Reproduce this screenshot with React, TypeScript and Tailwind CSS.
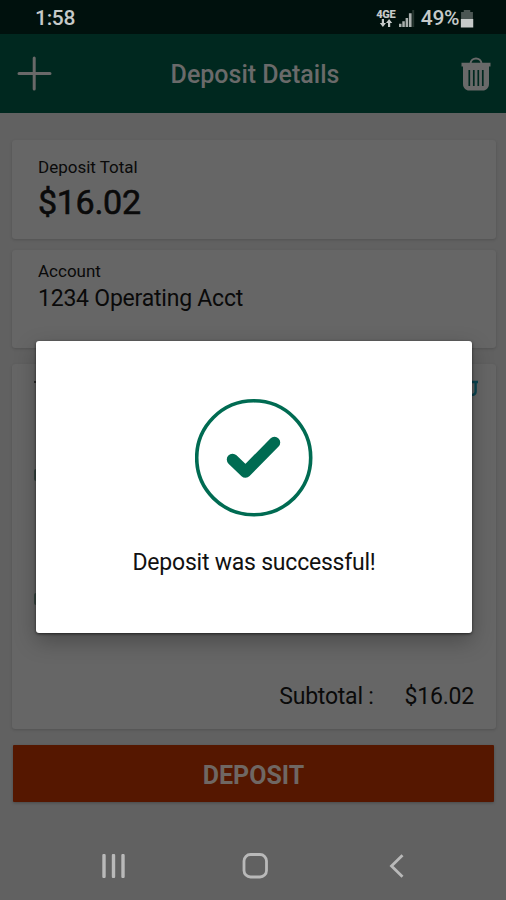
import React from 'react';

const TrashIcon: React.FC = () => (
    <svg width="30" height="34" viewBox="0 0 30 34" fill="none">
        <path d="M9.5 6.5 C10 -0.3 20 -0.3 20.5 6.5" stroke="#696969" strokeWidth="2" />
        <path d="M0.5 5.8 H29.5 V9.5 H28 V27 C28 31 25 33.5 22 33.5 H8 C5 33.5 2 31 2 27 V9.5 H0.5 Z" fill="#696969" />
        <path d="M8.3 13 V29 M12.8 13 V29 M17.3 13 V29 M21.8 13 V29" stroke="#00281f" strokeWidth="1.7" />
    </svg>
);

const StatusBar: React.FC = () => (
    <div className="h-[34px] shrink-0 bg-[#00110d] flex items-center pl-[35px] pr-[32px] pt-[3px] text-[#c6cac9]">
        <span className="flex-1 text-[21px] font-medium leading-none tracking-[-0.3px]">1:58</span>
        <div className="w-[22px] mr-[2px] flex flex-col items-center">
            <span className="text-[11px] font-black leading-[9px] tracking-[-0.2px]">4GE</span>
            <svg width="14" height="8" viewBox="0 0 14 8" fill="currentColor">
                <path d="M2.8 0 H5 V4 H7 L3.9 8 L0.8 4 H2.8 Z M9 8 H11.2 V4 H13.2 L10.1 0 L7 4 H9 Z" />
            </svg>
        </div>
        <svg width="16" height="17" viewBox="0 0 16 16" preserveAspectRatio="none" fill="#a9afad">
            <path d="M0 13 H2.5 V16 H0 Z M3.3 10.5 H5.8 V16 H3.3 Z M6.6 7.5 H9.1 V16 H6.6 Z M9.9 3 H12.6 V16 H9.9 Z" />
            <path d="M13.2 0 H15.2 V16 H13.2 Z" fill="#25352f" />
        </svg>
        <span className="ml-[6px] text-[21px] font-medium leading-none tracking-[-0.4px]">49%</span>
        <svg className="ml-px" width="14" height="18" viewBox="0 0 13 18" preserveAspectRatio="none">
            <path d="M3.5 0 H9.5 V2 H12 V9 H1 V2 H3.5 Z" fill="#4b5653" />
            <path d="M0.8 9 H12.3 V17.5 H0.8 Z" fill="#c6cac9" />
        </svg>
    </div>
);

const Header: React.FC = () => (
    <div className="h-[79px] shrink-0 bg-[#00281f] flex items-center justify-between pl-[17px] pr-[15px]">
        <svg width="35" height="35" viewBox="0 0 35 35" stroke="#696969" strokeWidth="3" strokeLinecap="round">
            <path d="M17.2 2 V33 M2 17.5 H33" />
        </svg>
        <h1 className="pt-[2px] pr-[3px] text-[25px] font-medium leading-none text-[#6a6a6a]">Deposit Details</h1>
        <TrashIcon />
    </div>
);

const NavBar: React.FC = () => (
    <div className="h-[69px] shrink-0 flex items-center pl-[102px]">
        <svg width="23" height="24" viewBox="0 0 23 24" stroke="#b9b9b9" strokeWidth="3.4" strokeLinecap="round">
            <path d="M2 1.5 V22.5 M11.5 1.5 V22.5 M21 1.5 V22.5" />
        </svg>
        <svg className="ml-[117px]" width="26" height="26" viewBox="0 0 26 26" fill="none" stroke="#b9b9b9" strokeWidth="2.8">
            <rect x="2" y="1.5" width="22.5" height="22.5" rx="6.5" />
        </svg>
        <svg className="ml-[121px]" width="15" height="24" viewBox="0 0 15 24" fill="none" stroke="#b9b9b9" strokeWidth="2.8">
            <path d="M13.5 1.2 L2.5 12 L13.5 22.8" />
        </svg>
    </div>
);

const SuccessDialog: React.FC = () => (
    <div className="absolute left-[36px] top-[341px] w-[436px] h-[292px] rounded-[3px] bg-white flex flex-col items-center pt-[58px] shadow-[0_8px_22px_rgba(0,0,0,0.28),0_1px_3px_rgba(0,0,0,0.6)]">
        <svg width="118" height="118" viewBox="0 0 118 118" fill="none" stroke="#006b52">
            <circle cx="58.7" cy="58.8" r="57" strokeWidth="3.6" />
            <path d="M37.5 60.5 L50.5 73 L79.5 43.5" strokeWidth="11.5" strokeLinecap="round" strokeLinejoin="round" />
        </svg>
        <p className="mt-[32px] text-[23px] leading-[28px] tracking-[-0.22px] text-[#111111]">Deposit was successful!</p>
    </div>
);

interface CardProps {
    className: string;
    children: React.ReactNode;
}
const Card: React.FC<CardProps> = ({ className, children }) => (
    <div className={`bg-[#666666] rounded-[3px] shadow-[0_1px_3px_rgba(0,0,0,0.16)] ${className}`}>{children}</div>
);

const App: React.FC = () => {
    return (
        <div className="relative w-[506px] h-[900px] overflow-hidden bg-[#616161] flex flex-col font-['Roboto',sans-serif] text-[#0a0a0a]">
            <StatusBar />
            <Header />
            <div className="flex-1 flex flex-col pt-[27px] pl-[12px] pr-[10px]">
                <Card className="h-[99px] pt-[17px] pl-[26px]">
                    <p className="text-[17px] leading-[20px]">Deposit Total</p>
                    <p className="mt-[5px] text-[34px] leading-[40px] tracking-[-0.3px] [-webkit-text-stroke:0.6px_#0a0a0a]">$16.02</p>
                </Card>
                <Card className="mt-[11px] h-[98px] pt-[11px] pl-[26px]">
                    <p className="text-[17px] leading-[20px]">Account</p>
                    <p className="mt-[4px] text-[23px] leading-[28px] tracking-[-0.22px]">1234 Operating Acct</p>
                </Card>
                <Card className="mt-[16px] h-[365px] flex flex-col pt-[14px] pl-[22px] pr-[18px] pb-[18px]">
                    <div className="flex justify-between">
                        <div className="mt-[3px] w-[4px] h-[2px] bg-[#2b2b2b]"></div>
                        <svg width="12" height="18" viewBox="0 0 12 18" fill="none" stroke="#0b4450" strokeWidth="2.4">
                            <path d="M0 4 H12 M9.6 4 V13.5 Q9.6 17 5 17" />
                        </svg>
                    </div>
                    <div className="mt-[73px] size-[12px] rounded-[2px] bg-[#394743]"></div>
                    <div className="mt-[112px] size-[12px] rounded-[2px] bg-[#394743]"></div>
                    <div className="mt-auto pr-[4px] flex justify-end text-[23px] leading-[28px] tracking-[-0.22px]">
                        <span className="mr-[31px]">Subtotal :</span>
                        <span>$16.02</span>
                    </div>
                </Card>
                <button className="mt-[16px] ml-px mr-[2px] h-[57px] pt-[4px] bg-[#551700] rounded-[1px] shadow-[0_1px_3px_rgba(0,0,0,0.25)] text-[25px] font-bold text-[#6f6763]">
                    DEPOSIT
                </button>
            </div>
            <NavBar />
            <SuccessDialog />
        </div>
    );
};

export default App;
